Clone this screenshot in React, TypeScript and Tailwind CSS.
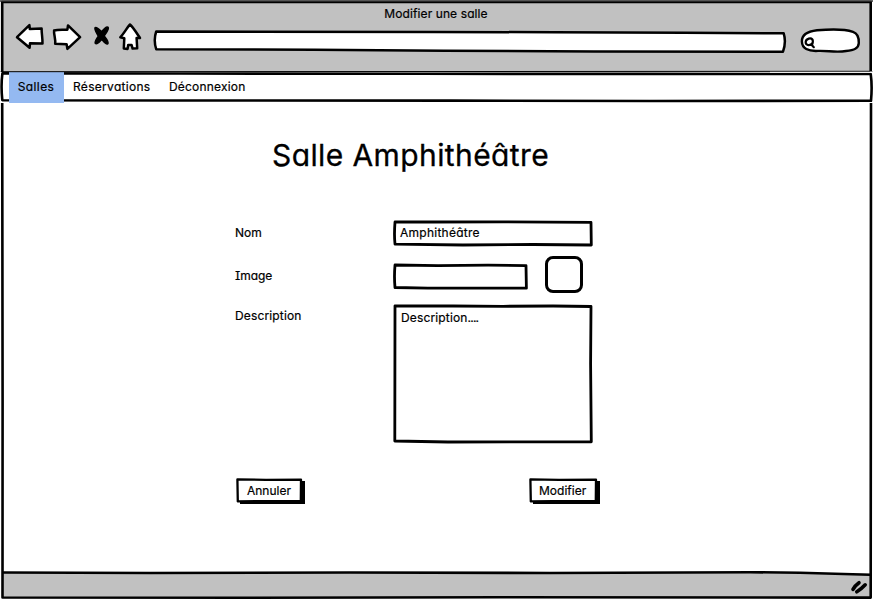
import React from "react";

const font =
  "font-['Inter',sans-serif] [font-feature-settings:'cv11'_1,'cv08'_1] text-black whitespace-nowrap";

type SketchProps = {
  w: number;
  h: number;
  d: string;
  fill?: string;
  stroke?: number;
};

function Sketch({ w, h, d, fill = "none", stroke = 2.8 }: SketchProps) {
  return (
    <svg
      className="pointer-events-none absolute left-0 top-0 overflow-visible"
      width={w}
      height={h}
      viewBox={`0 0 ${w} ${h}`}
      fill={fill}
      stroke="#000"
      strokeWidth={stroke}
      strokeLinejoin="round"
      strokeLinecap="round"
      aria-hidden="true"
    >
      <path d={d} />
    </svg>
  );
}

function Toolbar() {
  return (
    <header className="h-[72px] bg-[#c1c1c1]">
      <h1 className="h-[28px] pt-[4px] pr-[1px] text-center text-[12px] leading-[20px] font-normal tracking-[0.1px] [-webkit-text-stroke:0.2px_#000]">
        Modifier une salle
      </h1>
      <div className="flex h-[24px] items-start pl-[15px]">
        <svg
          className="-mt-[6px] h-[30px] w-[128px] shrink-0"
          viewBox="15 22 128 30"
          fill="#fff"
          stroke="#000"
          strokeWidth="2.5"
          strokeLinejoin="round"
          strokeLinecap="round"
        >
          <path d="M17 37.2L29.4 25.2L29.8 29.1L41.6 28.5C41.6 34 42.6 38 42.5 43.5L30 43.3L29.6 47.8Z" />
          <path d="M54.1 30.5C58 29.2 63 29.8 67.4 29.7L68 25.4L80.1 37.2L67.4 48.8L66.6 44.2L55.2 43.7C55.8 39 53.6 34 54.1 30.5Z" />
          <path d="M120.3 37.3C124 33.5 127 27.5 130 24.5C133 27 137 33.5 140 38L136.6 38L137.2 48.2L132.6 48.6L131.6 45L128.2 44.9L127.6 48.9L123.8 48.4L124.3 38.2Z" />
          <path
            d="M95.2 27.6C97 26.4 100.6 31 101.6 31.8C103 29.8 106.6 26 108.2 27.4C109.5 28.8 105.4 34 104.2 35.9C106 38.1 109.4 42.4 107.7 43.8C105.7 44.8 103.6 41.4 101.7 39.4C99.7 41.6 97.2 45 95.4 43.5C94 42 97 38.4 98.3 36C96.6 33 93.8 29.2 95.2 27.6Z"
            fill="#000"
            strokeWidth="1.5"
          />
        </svg>
        <div className="relative ml-[11px] h-[24px] w-[632px] shrink-0">
          <Sketch
            w={632}
            h={24}
            fill="#fff"
            stroke={2.5}
            d="M2.2 3.5Q120 3.8 280 4L400 4.2L530 4.7L629.7 5.3Q632.4 14 629 23.7L440 23.4L290 22.8L160 21.8L2.2 21.2Q-0.7 12 2.2 3.5Z"
          />
        </div>
        <div className="relative ml-[14px] h-[24px] w-[60px] shrink-0">
          <svg
            className="absolute left-0 top-0 overflow-visible"
            width="60"
            height="24"
            viewBox="800 28 60 24"
            fill="#fff"
            stroke="#000"
            strokeWidth="2.4"
            strokeLinecap="round"
          >
            <path d="M801.9 41.5C801.7 34.5 807 31.5 817 30.3C831 29 846 29.5 853 31.8C858.2 33.5 859 38 858.8 43C858.6 48.5 854 50 846 51C836 52.8 828 50.5 818 50.9C808 51.4 802.1 48.5 801.9 41.5Z" />
            <path
              d="M812.3 44.2C814 39.2 811.5 37.8 808.8 38.6C804.8 39.8 804.8 44 807.8 45C809.8 45.3 811.5 44.6 812.4 43.2M811.3 44.6L813.8 47.2"
              strokeWidth="2.2"
            />
          </svg>
        </div>
      </div>
    </header>
  );
}

function Menu() {
  return (
    <nav className="relative h-[31px] bg-white">
      <Sketch
        w={873}
        h={31}
        stroke={2.6}
        d="M2.4 1.4L180 1.5L420 1.8L640 1.9L870.7 2Q872.4 14 871 28.8L650 29L450 28.6L180 28.5L2.3 28.2Q0.8 14 2.4 1.4Z"
      />
      <ul className="relative flex pl-[9px] text-[12px] leading-[29px] tracking-[0.25px] [-webkit-text-stroke:0.2px_#000]">
        <li className="h-[31px] w-[55px] bg-[#94b9f1] pr-px text-center tracking-[0.4px]">Salles</li>
        <li className="w-[96px] pl-[9px] tracking-[0.3px]">Réservations</li>
        <li className="pl-[9px] tracking-[0.2px]">Déconnexion</li>
      </ul>
    </nav>
  );
}

function Button({ label, w }: { label: string; w: number }) {
  const outline =
    w < 70
      ? "M1.4 1.4L30 1.8L65 1.7L64.8 23L22 23.2L1.8 23.4Z"
      : "M1.4 1.4L30 1.8L67 1.7L66.8 23L24 23.2L1.8 23.4Z";
  return (
    <button className="relative h-[26px] text-left" style={{ width: w }}>
      <span className="absolute bottom-0 left-[4px] right-0 top-[3px] bg-black" />
      <Sketch w={w} h={26} fill="#fff" stroke={2.3} d={outline} />
      <span
        className={`relative block text-[12px] leading-[24px] [-webkit-text-stroke:0.2px_#000] ${
          w < 70 ? "pl-[11px]" : "pl-[10px]"
        }`}
      >
        {label}
      </span>
    </button>
  );
}

function Form() {
  return (
    <main className="h-[469px] pl-[235px] pt-[31px]">
      <h2 className="ml-[37px] h-[86px] text-[30px] font-normal leading-[42px] tracking-[0.4px] [-webkit-text-stroke:0.3px_#000]">
        Salle Amphithéâtre
      </h2>
      <div className="flex h-[43px] text-[12px] leading-[26px] [-webkit-text-stroke:0.2px_#000]">
        <label className="w-[158px]">Nom</label>
        <div className="relative h-[26px] w-[200px] pl-[7px] tracking-[0.25px]">
          <Sketch
            w={200}
            h={26}
            d="M2 2L40 2L110 1.8L198 2.4L198.3 25L140 24.5L70 25L2 24.2Q1 15 2 2Z"
          />
          Amphithéâtre
        </div>
      </div>
      <div className="flex h-[41px] text-[12px] leading-[26px] [-webkit-text-stroke:0.2px_#000]">
        <label className="w-[158px] tracking-[-0.05px]">Image</label>
        <div className="relative h-[27px] w-[135px]">
          <Sketch
            w={135}
            h={27}
            d="M2 2L45 2.6L95 2.2L133 2.6L133.4 25.2L75 25.2L35 25.2L2 24.5Q1 14 2 2Z"
          />
        </div>
        <div className="-mt-[7px] ml-[17px] h-[37px] w-[38px] rounded-[8px] border-3 border-black" />
      </div>
      <div className="flex h-[174px] text-[12px] [-webkit-text-stroke:0.2px_#000]">
        <label className="w-[158px] leading-[24px] tracking-[0.15px]">Description</label>
        <div className="relative h-[139px] w-[200px] pl-[8px] leading-[27px] tracking-[0.15px]">
          <Sketch
            w={200}
            h={139}
            d="M2 1.8L60 2L110 2.3L160 2L198 2.5L197.6 60L198.3 137.8L130 137.8L55 138L1.8 137Z"
          />
          Description<span className="tracking-[-0.8px]">....</span>
        </div>
      </div>
      <div className="flex items-start">
        <div className="flex w-[294px] pl-px">
          <Button label="Annuler" w={69} />
        </div>
        <Button label="Modifier" w={71} />
      </div>
    </main>
  );
}

function StatusBar() {
  return (
    <footer className="relative h-[28px] bg-[#c1c1c1]">
      <svg
        className="absolute bottom-0 left-0 overflow-visible"
        width="873"
        height="28"
        fill="none"
        stroke="#000"
        strokeWidth="2.6"
        strokeLinecap="round"
      >
        <path d="M700 -1H873V1.8L790 0.3Z" fill="#fff" stroke="none" />
        <path d="M2.5 0.5L150 1L350 0.5L550 1L750 0.2L800 0.7L870 2.7" />
        <path d="M853 17.4Q855 13.5 859 10.7M856.8 19.8Q861 17.3 865.2 12.8" strokeWidth="3.6" />
      </svg>
    </footer>
  );
}

export default function App() {
  return (
    <div className={`relative h-[600px] w-[873px] overflow-hidden bg-white ${font}`}>
      <Toolbar />
      <Menu />
      <Form />
      <StatusBar />
      <svg
        className="pointer-events-none absolute inset-0"
        width="873"
        height="600"
        fill="none"
        stroke="#000"
        strokeWidth="2.6"
        strokeLinejoin="round"
      >
        <path d="M0 0H873V71H871V2H2V71H0ZM0 103H2V598H871V103H873V600H0Z" fill="#fff" stroke="none" />
        <path d="M2.2 72V2H870.7V71.5M2.2 103L2.6 400L2.5 597.5L250 597.8L500 597.3L870.7 597.6L871 103" />
        <path d="M3 71.7L500 71.5L870 71.3" strokeWidth="1" />
        <path d="M770 72.3H872" stroke="#fff" strokeWidth="0.9" />
        <path d="M0 1H873" strokeWidth="1.4" stroke="#333" />
      </svg>
    </div>
  );
}
